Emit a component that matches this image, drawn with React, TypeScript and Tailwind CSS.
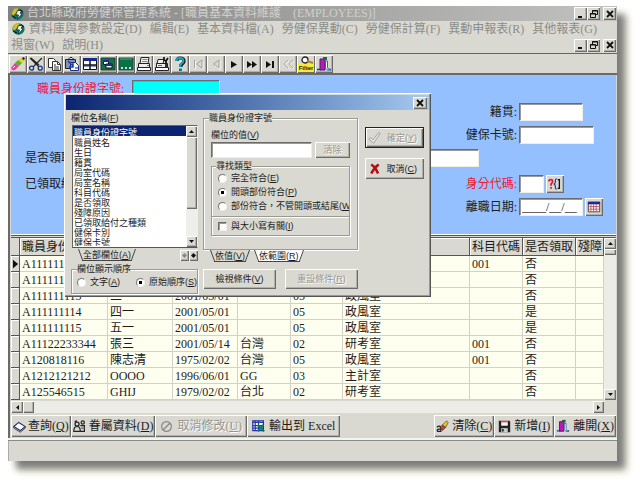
import type { ReactNode } from "react";

const raised =
  "bg-[#d9d9d2] shadow-[inset_1px_1px_0_#fff,inset_-1px_-1px_0_#6b6b6b,inset_-2px_-2px_0_#b0b0a8]";
const sunken =
  "border border-t-[#6b6b6b] border-l-[#6b6b6b] border-b-[#efefe8] border-r-[#efefe8] shadow-[inset_1px_1px_0_#9a9a9a] outline-none";
const disabled = "text-[#96968f] [text-shadow:1px_1px_0_#fff]";
const group =
  "min-w-0 border border-[#9a9a94] shadow-[1px_1px_0_#fff,inset_1px_1px_0_#fff]";
const radio =
  "m-0 h-[9px] w-[9px] shrink-0 appearance-none rounded-full border border-t-[#777] border-l-[#777] border-b-[#eee] border-r-[#eee] bg-white checked:bg-[radial-gradient(circle,#000_34%,#fff_40%)]";

function Svg({ children, className = "h-4 w-4" }: { children: ReactNode; className?: string }) {
  return (
    <svg viewBox="0 0 16 16" className={`shrink-0 ${className}`} fill="none" aria-hidden="true">
      {children}
    </svg>
  );
}

function AppIcon() {
  return (
    <Svg className="h-[14px] w-[15px]">
      <ellipse cx="8" cy="8" rx="7" ry="6.5" fill="#087b70" />
      <path d="M1 7L4 2L9 1L8 5L3 10Z" fill="#d4bb28" />
      <path d="M8 4h5l-2 3 2 1-5 6 1-5H6z" fill="#f2f2df" stroke="#111" strokeWidth=".8" />
      <path d="M2 10l4 3M11 3l3 3" stroke="#123" strokeWidth="1.5" />
    </Svg>
  );
}

const EraserIcon = (
  <Svg>
    <path d="M1 12L5 7L9 10L5 14Q2 15 1 12Z" fill="#ee39a9" />
    <path d="M5 7L8 4L12 7L9 10Z" fill="#55b52b" />
    <path d="M8 4L13 1L15 4L12 7Z" fill="#e7d21b" />
    <path d="M12 2l2-1 1 2-2 1z" fill="#222" />
    <path d="M3 12l2-2" stroke="#fff" />
  </Svg>
);
const CutIcon = (
  <Svg>
    <path d="M2 2l9 9M14 2L5 11M3 2l8 7M13 3l-8 8" stroke="#222" strokeWidth="1.1" />
    <circle cx="3.6" cy="12.2" r="2" stroke="#17358a" strokeWidth="1.3" />
    <circle cx="12.2" cy="12.2" r="2" stroke="#17358a" strokeWidth="1.3" />
  </Svg>
);
const CopyIcon = (
  <Svg>
    <path d="M2.5 2.5h5l2 2v7h-7z" fill="#fff" stroke="#333" />
    <path d="M6.5 5.5h5l3 3v6h-8z" fill="#fff" stroke="#333" />
    <path d="M11.5 5.5v3h3M8 9h2M8 11h5M8 13h5" stroke="#333" />
  </Svg>
);
const PasteIcon = (
  <Svg>
    <path d="M1.5 3.5h10v9h-10z" fill="#8790b5" stroke="#222" />
    <path d="M4 3.5l2-2h2l2 2z" fill="#ddd" stroke="#222" />
    <path d="M6.5 6.5h5l3 3v5h-8z" fill="#fff" stroke="#162f92" />
    <path d="M4 5l5 5M9 7v4H5" stroke="#173ea7" strokeWidth="1.5" />
    <path d="M11 12h3" stroke="#222" />
  </Svg>
);
const TileIcon = (
  <Svg>
    <path d="M1.5 2.5h13v11h-13z" fill="#fff" stroke="#111" />
    <path d="M1 2h14v3H1z" fill="#172a87" />
    <path d="M8 5v8M2 9h12" stroke="#111" strokeWidth="1.5" />
    <path d="M2 10h12" stroke="#172a87" />
  </Svg>
);
const CascadeIcon = (
  <Svg>
    <path d="M1 2h14v12H1z" fill="#087448" stroke="#333" />
    <path d="M3.5 4.5h5v4h-5zM6 8h6v4H6z" fill="#fff" stroke="#111" />
    <path d="M3 4h6v2H3zM6 8h6v2H6z" fill="#1c2e98" />
  </Svg>
);
const DesktopIcon = (
  <Svg>
    <path d="M1 2h14v12H1z" fill="#077245" stroke="#1f463b" />
    <path d="M2 3h12" stroke="#56a17f" />
    <path d="M3 12h2M7 12h2M11 12h2" stroke="#fff" strokeWidth="1.5" />
  </Svg>
);
const PrintIcon = (
  <Svg>
    <path d="M5 1.5h8l-1 6H4zM2.5 7.5h11v4h-11z" fill="#eee" stroke="#222" />
    <path d="M1.500 11.500h13v3h-13z" fill="#fff" stroke="#222" />
    <path d="M6.500 3.500h5M6 5.500h5" stroke="#888" />
    <path d="M11 9.5h2" stroke="#777" />
  </Svg>
);
const SetupIcon = (
  <Svg>
    <path d="M4 3.5h6l-1 4H3zM2.5 7.5h11v4h-11z" fill="#eee" stroke="#222" />
    <path d="M1.500 11.500h13v3h-13z" fill="#fff" stroke="#222" />
    <path d="M10 1v3l2 1 2-3M12 5v6" stroke="#111" strokeWidth="1.7" />
    <path d="M4 9.5h4" stroke="#b33" />
  </Svg>
);
const HelpIcon = (
  <Svg>
    <path d="M5 5Q5 2 8 2Q12 2 12 5Q12 7 9 9V11" stroke="#111" strokeWidth="3.2" />
    <path d="M4.5 5Q4.5 2 8 2Q11.4 2 11.4 5Q11.4 7 8.4 9V11" stroke="#18a4ba" strokeWidth="2" />
    <path d="M7 12.5h3v2.5H7z" fill="#087a9c" />
  </Svg>
);
const FirstIcon = (
  <Svg>
    <path d="M5.500 5v8M13 5v8" stroke="#fff" />
    <path d="M4.5 4v8M12 4v8L6.5 8z" stroke="#a2a29a" />
  </Svg>
);
const PriorIcon = (
  <Svg>
    <path d="M12 5v8l-5-3" stroke="#fff" />
    <path d="M11 4v8L5.500 8z" stroke="#a2a29a" />
  </Svg>
);
const NextIcon = (
  <Svg>
    <path d="M5 5l6 3.500-6 3.500z" fill="#111" />
  </Svg>
);
const FastIcon = (
  <Svg>
    <path d="M3 5l5 3.500-5 3.500zM8 5l5 3.500-5 3.500z" fill="#111" />
  </Svg>
);
const LastIcon = (
  <Svg>
    <path d="M4 5l5 3.500-5 3.500zM10 5h2v7h-2z" fill="#111" />
  </Svg>
);
const RewindIcon = (
  <Svg>
    <path d="M9 5L5 8l4 5M14 5l-4 3 4 5" stroke="#fff" strokeWidth=".7" />
    <path d="M8 4L4 8l4 4M13 4L9 8l4 4" stroke="#a8a8a0" />
  </Svg>
);
const FilterIcon = (
  <span className="relative block h-4 w-4 bg-[#f3ed35]">
    <svg viewBox="0 0 16 8" className="block h-2 w-4" fill="none" aria-hidden="true">
      <path d="M0 0h16v8H0z" fill="#d9d9d2" />
      <circle cx="7" cy="4" r="3" fill="#fff" stroke="#222" strokeWidth="1.3" />
      <path d="M9 5l6 2" stroke="#b38122" strokeWidth="2" />
    </svg>
    <span className="absolute bottom-0 left-0 w-4 text-center font-['Liberation_Sans',sans-serif] text-[6px] leading-[8px] font-bold text-[#222]">
      Filter
    </span>
  </span>
);
const ExitIcon = (
  <Svg>
    <path d="M1 13.500h4M11 13.500h4" stroke="#26349b" strokeWidth="1.5" />
    <path d="M4 3h5v11H4z" fill="#c116b5" stroke="#322473" />
    <path d="M9.500 5h2v7l3 2h-3l-2-2z" fill="#fff" stroke="#276ca8" />
    <path d="M7 1h4v3H7z" fill="#176d37" />
  </Svg>
);

const tools: [string, ReactNode][] = [
  ["清除", EraserIcon],
  ["剪下", CutIcon],
  ["複製", CopyIcon],
  ["貼上", PasteIcon],
  ["並排", TileIcon],
  ["重疊", CascadeIcon],
  ["桌面", DesktopIcon],
  ["列印", PrintIcon],
  ["印表設定", SetupIcon],
  ["說明", HelpIcon],
  ["首筆", FirstIcon],
  ["前一筆", PriorIcon],
  ["下一筆", NextIcon],
  ["快轉", FastIcon],
  ["末筆", LastIcon],
  ["倒轉", RewindIcon],
  ["篩選", FilterIcon],
  ["離開", ExitIcon],
];

const menus = [
  "編輯(E)",
  "基本資料檔(A)",
  "勞健保異動(C)",
  "勞健保計算(F)",
  "異動申報表(R)",
  "其他報表(G)",
  "視窗(W)",
  "說明(H)",
];

const fields = [
  "職員身份證字號",
  "職員姓名",
  "生日",
  "籍貫",
  "局室代碼",
  "局室名稱",
  "科目代碼",
  "是否領取",
  "殘障原因",
  "已領取給付之種類",
  "健保卡別",
  "健保卡號",
];

const rows = [
  ["A111111111", "", "", "", "", "", "001", "否", ""],
  ["A111111112", "", "", "", "", "", "", "否", ""],
  ["A111111113", "三一", "2001/05/01", "", "05", "政風室", "", "否", ""],
  ["A111111114", "四一", "2001/05/01", "", "05", "政風室", "", "是", ""],
  ["A111111115", "五一", "2001/05/01", "", "05", "政風室", "", "是", ""],
  ["A11122233344", "張三", "2001/05/14", "台灣", "02", "研考室", "001", "否", ""],
  ["A120818116", "陳志清", "1975/02/02", "台灣", "05", "政風室", "001", "否", ""],
  ["A1212121212", "OOOO", "1996/06/01", "GG", "03", "主計室", "", "否", ""],
  ["A125546515", "GHIJ", "1979/02/02", "台北", "02", "研考室", "", "否", ""],
];

const headers = ["職員身份證字號", "", "", "", "", "", "科目代碼", "是否領取", "殘障"];

function CloseGlyph() {
  return (
    <svg viewBox="0 0 8 8" className="h-2 w-2" aria-hidden="true">
      <path d="M1 1l6 6M7 1L1 7" stroke="#111" strokeWidth="1.8" />
    </svg>
  );
}

function WindowControls() {
  const box = `flex h-[13px] w-[13px] items-center justify-center ${raised}`;
  return (
    <div className="flex shrink-0">
      <button aria-label="最小化" className={box}>
        <svg viewBox="0 0 8 8" className="h-2 w-2" aria-hidden="true">
          <path d="M1 6h4v2H1z" fill="#111" />
        </svg>
      </button>
      <button aria-label="還原" className={box}>
        <svg viewBox="0 0 8 8" className="h-2 w-2" fill="none" stroke="#111" aria-hidden="true">
          <path d="M2.500 3V.500h5v4H6M2 1h6" />
          <path d="M.500 3.500h5v4h-5zM0 4h6" />
        </svg>
      </button>
      <button aria-label="關閉" className={`ml-[3px] ${box}`}>
        <CloseGlyph />
      </button>
    </div>
  );
}

function Key({ text, k }: { text: string; k: string }) {
  return (
    <span className="whitespace-nowrap">
      {text}(<u>{k}</u>)
    </span>
  );
}

function Arrow({ dir }: { dir: "up" | "down" | "left" | "right" }) {
  const d = {
    up: "M1 5h5L3.500 2z",
    down: "M1 2h5L3.500 5z",
    left: "M5 1v5L2 3.500z",
    right: "M2 1v5l3-2.500z",
  }[dir];
  return (
    <svg viewBox="0 0 7 7" className="h-[7px] w-[7px]" aria-hidden="true">
      <path d={d} fill="#111" />
    </svg>
  );
}

function RightField({ id, label, red, children }: { id: string; label: string; red?: boolean; children: ReactNode }) {
  return (
    <div className="ml-auto flex items-center">
      <label htmlFor={id} className={`mr-[2px] ${red ? "text-[#f01830]" : ""}`}>
        {label}
      </label>
      <div className="flex w-[97px] gap-[2px]">{children}</div>
    </div>
  );
}

function Tab({ label, k, white }: { label: string; k: string; white?: boolean }) {
  const side = white ? "bg-white" : "bg-[#d9d9d2]";
  return (
    <button className="relative h-3 px-[7px]">
      <span className={`absolute inset-y-0 left-[2px] w-1/2 origin-top skew-x-[20deg] border-b border-l border-[#444] ${side}`} />
      <span className={`absolute inset-y-0 right-[2px] w-1/2 origin-top -skew-x-[20deg] border-r border-b border-[#444] ${side}`} />
      <span className="relative">
        <Key text={label} k={k} />
      </span>
    </button>
  );
}

function SearchDialog() {
  return (
    <div
      role="dialog"
      aria-label="欄位搜尋"
      className="absolute top-[87px] left-[56px] w-[367px] bg-[#d9d9d2] p-[2px] pb-[3px] font-['Liberation_Sans','Noto_Sans_CJK_TC',sans-serif] text-[9px] leading-[12px] shadow-[inset_1px_1px_0_#fff,inset_-1px_-1px_0_#555,inset_-2px_-2px_0_#999]"
    >
      <div className="flex h-[15px] items-center justify-end bg-linear-to-r from-[#0c2470] to-[#a6caf0] pr-[2px]">
        <button aria-label="關閉" className={`flex h-3 w-[14px] items-center justify-center ${raised}`}>
          <CloseGlyph />
        </button>
      </div>

      <div className="flex pl-[5px]">
        <div className="w-[127px] pt-[2px]">
          <label htmlFor="fieldlist" className="block h-[13px]">
            <Key text="欄位名稱" k="F" />
          </label>
          <div className="ml-[1px] flex h-[123px] border border-t-[#666] border-r-[#eee] border-b-[#555] border-l-[#666] bg-white">
            <select
              id="fieldlist"
              size={12}
              defaultValue={fields[0]}
              className="h-[120px] min-w-0 flex-1 appearance-none overflow-hidden bg-white text-[9px] leading-[10px] outline-none"
            >
              {fields.map((f) => (
                <option
                  key={f}
                  className="h-[10px] min-h-0 px-[1px] py-0 text-[9px] leading-[10px] checked:bg-linear-to-r checked:from-[#0c2470] checked:to-[#0c2470] checked:[-webkit-text-fill-color:#fff]"
                >
                  {f}
                </option>
              ))}
            </select>
            <div className="flex w-[11px] flex-col bg-[#eeeeea]">
              <span className={`flex h-[11px] items-center justify-center ${raised}`}>
                <Arrow dir="up" />
              </span>
              <span className={`h-[72px] ${raised}`} />
              <span className={`mt-auto flex h-[11px] items-center justify-center ${raised}`}>
                <Arrow dir="down" />
              </span>
            </div>
          </div>
          <div className="flex justify-between pt-[1px] pl-[5px]">
            <Tab label="全部欄位" k="A" />
            <div className="flex pt-[1px]">
              <button aria-label="上一頁" className={`flex h-[11px] w-[9px] items-center justify-center ${raised}`}>
                <Svg className="h-[5px] w-[5px]">
                  <path d="M8 0l8 8-8 8-8-8z" fill="#888" />
                </Svg>
              </button>
              <button aria-label="下一頁" className={`flex h-[11px] w-[9px] items-center justify-center ${raised}`}>
                <Svg className="h-[5px] w-[5px]">
                  <path d="M8 0l8 8-8 8-8-8z" fill="#111" />
                </Svg>
              </button>
            </div>
          </div>
          <fieldset className={`mt-[2px] h-[31px] pl-[5px] ${group}`}>
            <legend className="bg-[#d9d9d2] leading-[12px]">欄位顯示順序</legend>
            <div className="flex items-center justify-between pt-[1px]">
              <label className="flex items-center gap-1">
                <input type="radio" name="order" className={radio} />
                <Key text="文字" k="A" />
              </label>
              <label className="flex items-center gap-1">
                <input type="radio" name="order" defaultChecked className={radio} />
                <Key text="原始順序" k="S" />
              </label>
            </div>
          </fieldset>
        </div>

        <div className="ml-[5px] w-[155px] pt-[2px]">
          <fieldset className={`h-[138px] px-[7px] ${group}`}>
            <legend className="-ml-[2px] bg-[#d9d9d2] leading-[12px]">職員身份證字號</legend>
            <label htmlFor="fieldvalue" className="block pt-[5px] pb-[1px]">
              <Key text="欄位的值" k="V" />
            </label>
            <div className="flex justify-between">
              <input id="fieldvalue" className={`h-4 w-[101px] bg-white ${sunken}`} />
              <button disabled className={`h-4 w-[35px] ${raised} ${disabled}`}>
                清除
              </button>
            </div>
            <fieldset className={`mt-[2px] ${group}`}>
              <legend className="ml-1 bg-[#d9d9d2] leading-[12px]">尋找類型</legend>
              <div className="flex flex-col gap-[2px] overflow-hidden pb-1 pl-[6px]">
                <label className="flex items-center gap-1">
                  <input type="radio" name="match" className={radio} />
                  <Key text="完全符合" k="E" />
                </label>
                <label className="flex items-center gap-1">
                  <input type="radio" name="match" defaultChecked className={radio} />
                  <Key text="開頭部份符合" k="P" />
                </label>
                <label className="flex items-center gap-1">
                  <input type="radio" name="match" className={radio} />
                  <Key text="部份符合，不管開頭或結尾" k="W" />
                </label>
              </div>
              <label className="flex items-center gap-1 border-t border-[#9a9a94] py-[3px] pl-[6px] shadow-[inset_0_1px_0_#fff]">
                <input type="checkbox" className={`m-0 h-[9px] w-[9px] shrink-0 appearance-none bg-white ${sunken}`} />
                <Key text="與大小寫有關" k="I" />
              </label>
            </fieldset>
          </fieldset>
          <div className="flex pl-[5px]">
            <Tab label="依值" k="V" />
            <Tab label="依範圍" k="R" white />
          </div>
          <div className="mt-[7px] flex justify-between">
            <button className={`h-5 w-[73px] ${raised}`}>
              <Key text="檢視條件" k="V" />
            </button>
            <button disabled className={`h-5 w-[73px] ${raised} ${disabled}`}>
              <Key text="重設條件" k="R" />
            </button>
          </div>
        </div>

        <div className="ml-[7px] flex w-[59px] flex-col gap-[10px] pt-[17px]">
          <button disabled className={`flex h-[21px] items-center justify-between border border-[#222] pr-[6px] pl-[2px] ${raised} ${disabled}`}>
            <Svg className="h-[13px] w-[13px]">
              <path d="M1 10l2-2 3 3 7-9 2 1-8 12z" fill="#e8e8e3" stroke="#96968f" />
            </Svg>
            <Key text="確定" k="Y" />
          </button>
          <button className={`flex h-[21px] items-center justify-between pr-[7px] pl-1 ${raised}`}>
            <Svg className="h-3 w-3">
              <path d="M3 2q6 4 9 12M13 2Q7 6 3 14" stroke="#b30e17" strokeWidth="3.5" />
            </Svg>
            <Key text="取消" k="C" />
          </button>
        </div>
      </div>
    </div>
  );
}

export default function App() {
  const field = `h-[18px] px-[2px] ${sunken}`;
  const action = `flex h-[22px] items-center ${raised}`;
  const cell = "border-r border-b border-[#d2d2c8] p-0 pt-[2px] pl-[2px]";
  return (
    <div className="min-h-screen w-full bg-white pt-[6px] pr-[23px] pb-[18px] pl-2 font-['Liberation_Serif','Noto_Sans_CJK_TC',serif] text-[12px] leading-[16px] text-[#1c1c1c]">
      <div className="relative bg-[#d9d9d2] shadow-[8px_8px_7px_#7c7c7c,11px_11px_8px_#f0f0d8]">
        <header className="flex h-[15px] items-center gap-[2px] bg-linear-to-r from-[#828282] to-[#c2c2c0] pr-[1px] pl-[2px]">
          <AppIcon />
          <h1 className="flex-1 overflow-hidden leading-[15px] whitespace-pre text-[#d0d0cc]">
            {"台北縣政府勞健保管理系統 - [職員基本資料維護    (EMPLOYEES)]"}
          </h1>
          <WindowControls />
        </header>

        <nav className="flex flex-wrap items-center gap-x-2 border-b border-[#666] pr-[1px] pl-[3px] text-[#8c8c88]">
          <button className="flex h-4 items-center gap-[3px]">
            <AppIcon />
            資料庫與參數設定(D)
          </button>
          {menus.map((m) => (
            <button key={m} className="h-4">
              {m}
            </button>
          ))}
          <div className="ml-auto">
            <WindowControls />
          </div>
        </nav>

        <div className="flex border-b-2 border-[#6a6a6a] pt-[1px] pl-[1px]">
          {tools.map(([name, icon]) => (
            <button key={name} aria-label={name} className={`flex h-[18px] w-[18px] items-center justify-center p-[1px] ${raised}`}>
              {icon}
            </button>
          ))}
        </div>

        <main className="border-l-2 border-[#6a6a6a] pr-[1px] pl-[1px]">
          <form className="flex flex-col gap-[5px] bg-[#94c0ff] pt-[5px] pb-[19px]" onSubmit={(e) => e.preventDefault()}>
            <div className="flex items-center pl-[26px]">
              <label htmlFor="idno" className="mr-2 text-[#f01830]">
                職員身份證字號:
              </label>
              <input id="idno" className={`${field} w-[88px] bg-[#00ffff]`} />
            </div>
            <div className="flex">
              <RightField id="native" label="籍貫:">
                <input id="native" className={`${field} w-16 bg-white`} />
              </RightField>
            </div>
            <div className="flex">
              <RightField id="card" label="健保卡號:">
                <input id="card" className={`${field} w-[75px] bg-white`} />
              </RightField>
            </div>
            <div className="mr-[137px] flex items-center gap-2 pl-[14px]">
              <label htmlFor="paid">是否領取:</label>
              <input id="paid" className={`${field} min-w-0 flex-1 bg-white`} />
            </div>
            <div className="mt-[3px] flex items-center pl-[14px]">
              <span>已領取給付:</span>
              <RightField id="kind" label="身分代碼:" red>
                <input id="kind" className={`${field} w-[25px] bg-white`} />
                <button aria-label="查詢代碼" className={`flex h-[18px] w-[18px] items-center justify-center ${raised}`}>
                  <Svg className="h-[14px] w-[14px]">
                    <path d="M1 5Q1 3 3 3Q6 3 5 6L3.500 8V10M3.500 11.500v2" stroke="#dd1c2b" strokeWidth="2" />
                    <path d="M10 2Q8 2 8.500 5Q8.500 7 7 8Q8.500 9 8.500 11Q8 14 10 14" stroke="#2433a8" strokeWidth="1.3" />
                    <path d="M11 3h2v10h-2" stroke="#111" strokeWidth="1.5" />
                  </Svg>
                </button>
              </RightField>
            </div>
            <div className="flex">
              <RightField id="leave" label="離職日期:">
                <input id="leave" defaultValue="____/__/__" className={`${field} w-16 bg-white`} />
                <button aria-label="選擇日期" className={`flex h-[18px] w-[18px] items-center justify-center ${raised}`}>
                  <Svg className="h-[14px] w-[14px]">
                    <path d="M1.500 2.500h13v11h-13z" fill="#fff" stroke="#333" />
                    <path d="M1 2h14v3H1z" fill="#1c2d91" />
                    <path d="M2 7.500h12M2 10.500h12M4.500 5v8M7.500 5v8M10.500 5v8" stroke="#b84b5c" />
                  </Svg>
                </button>
              </RightField>
            </div>
          </form>

          <div className="flex border-t-[3px] border-double border-[#555] shadow-[0_-1px_0_#fff]">
            <div className="min-w-0 flex-1">
              <table className="w-full table-fixed border-separate border-spacing-0 bg-[#fffff0]">
                <colgroup>
                  <col className="w-[9px]" />
                  <col className="w-[88px]" />
                  <col className="w-[65px]" />
                  <col className="w-[65px]" />
                  <col className="w-[53px]" />
                  <col className="w-[52px]" />
                  <col />
                  <col className="w-[53px]" />
                  <col className="w-[53px]" />
                  <col className="w-[28px]" />
                </colgroup>
                <thead>
                  <tr className="h-[18px] bg-[#d9d9d2] text-left leading-[15px]">
                    <th className="border-r border-b border-[#555] p-0" />
                    {headers.map((h, i) => (
                      <th
                        key={i}
                        className="overflow-hidden border-r border-b border-[#555] p-0 pt-[2px] pl-[2px] font-normal whitespace-nowrap shadow-[inset_1px_1px_0_#fff]"
                      >
                        {h}
                      </th>
                    ))}
                  </tr>
                </thead>
                <tbody>
                  {rows.map((r, i) => (
                    <tr key={r[0]} className="h-4 leading-[13px]">
                      <td className="border-r border-b border-[#555] bg-[#d9d9d2] p-0 shadow-[inset_1px_1px_0_#fff]">
                        {i === 0 && (
                          <svg viewBox="0 0 8 10" className="ml-[1px] h-[10px] w-[7px]" aria-label="目前資料列">
                            <path d="M1 0l6 5-6 5z" fill="#111" />
                          </svg>
                        )}
                      </td>
                      {r.map((c, j) => (
                        <td key={j} className={cell}>
                          {c}
                        </td>
                      ))}
                    </tr>
                  ))}
                </tbody>
              </table>
            </div>
            <div className="flex w-3 flex-col bg-[#ededE8]">
              <span className={`flex h-[11px] items-center justify-center ${raised}`}>
                <Arrow dir="up" />
              </span>
              <span className={`h-[6px] ${raised}`} />
              <span className={`mt-auto flex h-[11px] items-center justify-center ${raised}`}>
                <Arrow dir="down" />
              </span>
            </div>
          </div>
          <div className="mt-[1px] flex h-3 bg-[#ededE8]">
            <span className={`flex w-3 items-center justify-center ${raised}`}>
              <Arrow dir="left" />
            </span>
            <span className={`w-[11px] ${raised}`} />
            <span className={`ml-auto flex w-[11px] items-center justify-center ${raised}`}>
              <Arrow dir="right" />
            </span>
            <span className="w-3 bg-[#d9d9d2]" />
          </div>

          <div className="flex pt-[2px] pb-[1px]">
            <button className={`${action} gap-[2px] px-[2px]`}>
              <Svg className="h-[13px] w-[13px]">
                <path d="M1 8v2l8 5 6-5V8" stroke="#222" />
                <path d="M1 8l6-5 8 5-6 5z" fill="#fff" stroke="#222e72" strokeWidth="1.3" />
              </Svg>
              <Key text="查詢" k="Q" />
            </button>
            <button className={`${action} gap-[3px] px-[2px]`}>
              <Svg className="h-[13px] w-[13px]">
                <circle cx="5" cy="5" r="2.500" stroke="#222" strokeWidth="1.5" />
                <circle cx="12" cy="3" r="2" stroke="#222" strokeWidth="1.5" />
                <path d="M1 14q0-6 4-6t4 6zM9 7h5v7h-5M2 2l3-1" stroke="#222" strokeWidth="1.5" />
                <path d="M10 10h4" stroke="#777" strokeWidth="2" />
              </Svg>
              <Key text="眷屬資料" k="D" />
            </button>
            <button disabled className={`${action} ${disabled} gap-1 px-[5px]`}>
              <Svg className="h-[13px] w-[13px]">
                <circle cx="8" cy="8" r="6" stroke="#888" strokeWidth="1.5" />
                <path d="M4 12l8-8" stroke="#888" strokeWidth="1.5" />
              </Svg>
              <Key text="取消修改" k="U" />
            </button>
            <button className={`${action} gap-1 px-[5px]`}>
              <Svg className="h-[13px] w-[13px]">
                <path d="M1 1h13v12H1z" fill="#fff" stroke="#2030a0" strokeWidth="1.5" />
                <path d="M1 3h13M4 1v12M8 1v12M1 7h13M1 10h13" stroke="#2437b4" strokeWidth="1.5" />
                <path d="M7 6l8 8M14 6l-7 8" stroke="#087a62" strokeWidth="2.500" />
              </Svg>
              <span className="whitespace-nowrap">輸出到 Excel</span>
            </button>
            <button className={`${action} ml-auto gap-[3px] px-[2px]`}>
              <Svg className="h-[13px] w-[13px]">
                <path d="M1 9q3-3 5 0v5H2q-2-3 4-3" stroke="#222" strokeWidth="1.5" />
                <path d="M5 9l3-3 4 3-4 4z" fill="#d63931" stroke="#222" strokeWidth=".7" />
                <path d="M8 6l5-5 2 2-3 6z" fill="#e4cc25" stroke="#222" strokeWidth=".7" />
              </Svg>
              <Key text="清除" k="C" />
            </button>
            <button className={`${action} gap-[3px] px-1`}>
              <Svg className="h-[13px] w-[13px]">
                <path d="M1 1h13l1 1v13H1z" fill="#222" />
                <path d="M4 1h8v6H4z" fill="#fff" />
                <path d="M4 1h8v2H4z" fill="#db4c55" />
                <path d="M4 10h8v5H4z" fill="#ccc" />
                <path d="M5 11h2v3H5z" fill="#222" />
              </Svg>
              <Key text="新增" k="I" />
            </button>
            <button className={`${action} gap-[3px] px-[2px] [&>svg]:h-[14px] [&>svg]:w-[14px]`}>
              {ExitIcon}
              <Key text="離開" k="X" />
            </button>
          </div>
        </main>
        <footer className="mt-[2px] h-[21px] border-t border-[#8a8a86] shadow-[0_-2px_0_#f4f4ee,inset_1px_0_0_#aaa]" />

        <SearchDialog />
      </div>
    </div>
  );
}
